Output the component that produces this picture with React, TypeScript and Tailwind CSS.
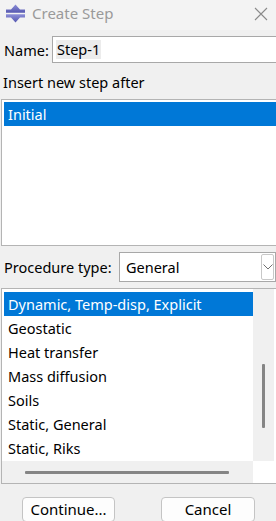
import React from "react";

const items = [
  "Dynamic, Temp-disp, Explicit",
  "Geostatic",
  "Heat transfer",
  "Mass diffusion",
  "Soils",
  "Static, General",
  "Static, Riks",
];

export default function App() {
  return (
    <div
      className="w-[276px] h-[521px] overflow-hidden bg-[#f0f0f0] text-black text-[14.5px] leading-none"
      style={{ fontFamily: "'Noto Sans', 'Open Sans', sans-serif" }}
    >
      {/* Title bar */}
      <div className="h-[30px] flex items-center pb-[4px] bg-[#f3f3f3] relative">
        <svg width="20" height="19" viewBox="0 0 20 19" className="ml-[6px]">
          <defs>
            <linearGradient id="g" x1="0" y1="0" x2="0" y2="1">
              <stop offset="0" stopColor="#8d8fd8" />
              <stop offset="1" stopColor="#5557b0" />
            </linearGradient>
          </defs>
          <polygon points="9.5,0.5 14,5.5 19,5.5 19,8.8 0,8.8 0,5.5 5,5.5" fill="url(#g)" />
          <polygon points="0,10.2 19,10.2 19,13.5 14,13.5 9.5,18.5 5,13.5 0,13.5" fill="url(#g)" />
        </svg>
        <span className="ml-[6px] text-[15px] text-[#9a9a9a]">Create Step</span>
        <svg width="14" height="14" viewBox="0 0 14 14" className="absolute right-[8px] top-[7px]">
          <path d="M1 1 L13 13 M13 1 L1 13" stroke="#8a8a8a" strokeWidth="1.1" />
        </svg>
      </div>

      {/* Name row */}
      <div className="mt-[6px] flex items-center h-[27px]">
        <span className="ml-[4px] w-[48px] pt-[2px]">Name:</span>
        <div className="flex-1 h-[27px] bg-white border border-[#a8a8a8] border-r-0 flex items-center pl-[3px]">
          <span className="bg-[#ececec] px-[1px] py-[2px]">Step-1</span>
        </div>
      </div>

      {/* Insert label */}
      <div className="h-[36px] flex items-center pl-[3px] pt-[2px]">Insert new step after</div>

      {/* List 1 */}
      <div className="ml-[1px] h-[147px] bg-white border border-[#b4b4b4] border-r-0 pt-[2px] pl-[2px]">
        <div className="h-[24px] bg-[#0078d7] text-white flex items-center pl-[4px]">Initial</div>
      </div>

      {/* Procedure type */}
      <div className="mt-[6px] h-[30px] flex items-center">
        <span className="ml-[4px] w-[115px]">Procedure type:</span>
        <div className="flex-1 h-[30px] bg-white border border-[#a8a8a8] flex items-center justify-between pl-[6px]">
          <span>General</span>
          <div className="w-[13px] h-[26px] mr-[1px] border border-[#c8c8c8] rounded-[2px] flex items-center justify-center">
            <svg width="10" height="6" viewBox="0 0 10 6">
              <path d="M0.5 0.5 L5 5 L9.5 0.5" fill="none" stroke="#707070" strokeWidth="1" />
            </svg>
          </div>
        </div>
      </div>

      {/* List 2 */}
      <div className="mt-[6px] ml-[1px] h-[196px] bg-white border border-[#b4b4b4] border-r-0 flex flex-col">
        <div className="flex flex-1">
          <div className="flex-1 pt-[3px] pl-[2px]">
            {items.map((t, i) => (
              <div
                key={t}
                className={
                  i === 0
                    ? "h-[24px] flex items-center pl-[4px] bg-[#0078d7] text-white"
                    : "h-[24px] flex items-center pl-[4px]"
                }
              >
                {t}
              </div>
            ))}
          </div>
          <div className="w-[21px] bg-[#f0f0f0] flex justify-center pt-[75px]">
            <div className="w-[3px] h-[64px] bg-[#858585] rounded-[1px]" />
          </div>
          <div className="w-[2px]" />
        </div>
        <div className="h-[22px] flex">
          <div className="flex-1 bg-[#f0f0f0] flex items-center pl-[23px]">
            <div className="w-[204px] h-[3px] bg-[#858585] rounded-[1px]" />
          </div>
          <div className="w-[23px] bg-white" />
        </div>
      </div>

      {/* Buttons */}
      <div className="mt-[13px] flex">
        <button className="ml-[22px] w-[93px] h-[25px] bg-[#fdfdfd] border border-[#c4c4c4] rounded-[4px] text-[15px] flex items-center justify-center">
          Continue...
        </button>
        <button className="ml-[46px] w-[94px] h-[25px] bg-[#fdfdfd] border border-[#c4c4c4] rounded-[4px] text-[15px] flex items-center justify-center">
          Cancel
        </button>
      </div>
    </div>
  );
}
